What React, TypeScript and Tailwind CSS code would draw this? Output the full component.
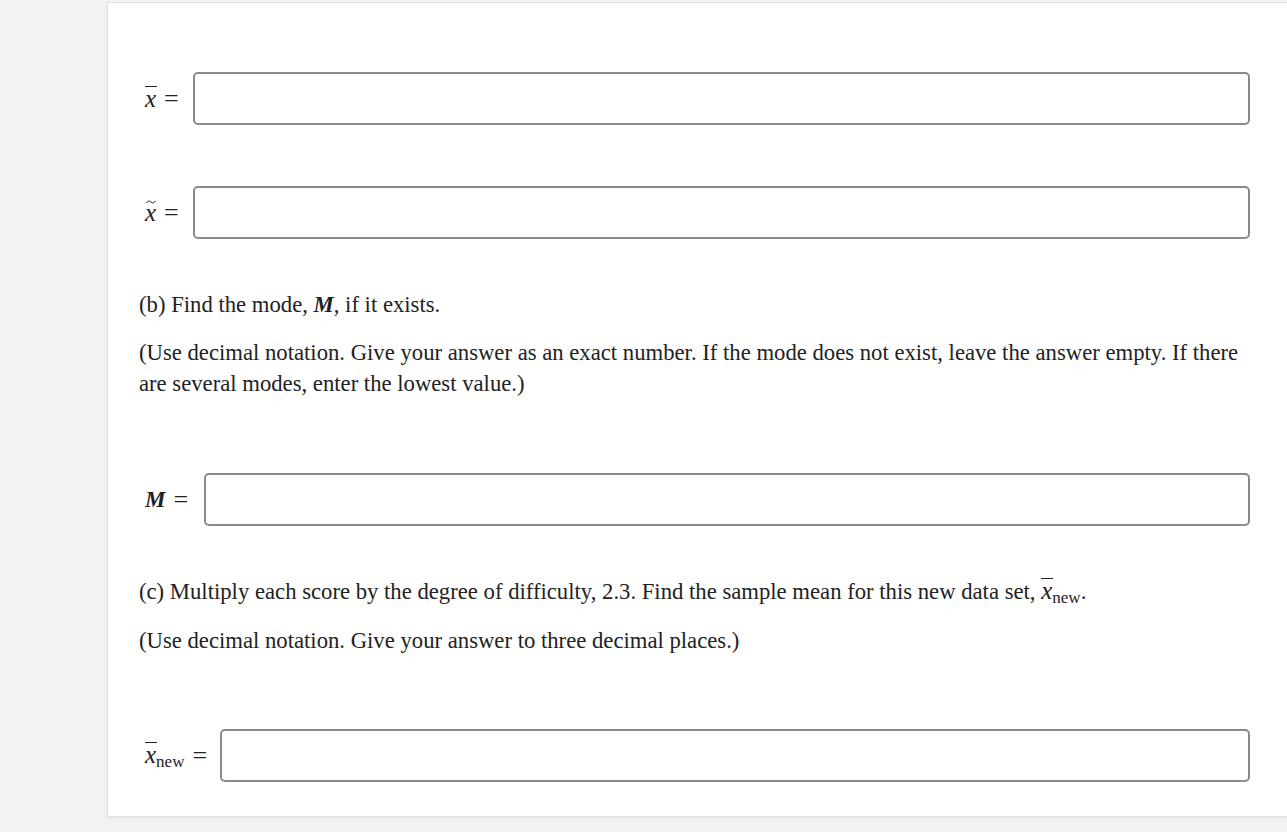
import React from "react";

const serif = { fontFamily: '"Liberation Serif", "Times New Roman", serif' };

function XBar() {
  return (
    <span className="relative inline-block text-[25px] italic">
      <span className="absolute left-0 right-[-1px] top-[3px] h-px bg-[#222]" />
      x
    </span>
  );
}

function XTilde() {
  return (
    <span className="relative inline-block text-[25px] italic">
      <svg className="absolute left-[1px] top-[3px]" width="10" height="4" viewBox="0 0 10 4">
        <path d="M0.5 3.2 C1.5 0.8 3.2 0.6 5 2 C6.8 3.4 8.3 3.2 9.5 0.8" fill="none" stroke="#222" strokeWidth="1" />
      </svg>
      x
    </span>
  );
}

function XNew() {
  return (
    <span className="inline-flex items-baseline">
      <XBar />
      <span className="relative top-[4px] text-[17px] not-italic">new</span>
    </span>
  );
}

function AnswerRow({ label, labelWidth }: { label: React.ReactNode; labelWidth: string }) {
  return (
    <div className="flex items-center">
      <div className={`flex shrink-0 items-center pl-[6px] text-[23px] text-[#222] ${labelWidth}`}>
        {label}
        <span className="ml-[8px] text-[26px] leading-none">=</span>
      </div>
      <input
        type="text"
        className="h-[53px] flex-1 rounded-[5px] border-2 border-[#8a8a8a] bg-white px-3 outline-none"
      />
    </div>
  );
}

export default function App() {
  return (
    <div className="min-h-screen bg-[#f2f2f2] pt-[2px] pl-[107px]" style={serif}>
      <div className="border border-r-0 border-[#e2e2e2] bg-white pt-[69px] pb-[34px] pl-[31px] pr-[37px] text-[22.7px] leading-[31px] text-[#222] shadow-[0_1px_2px_rgba(0,0,0,0.08)]">
        <AnswerRow label={<XBar />} labelWidth="w-[54px]" />
        <div className="mt-[61px]">
          <AnswerRow label={<XTilde />} labelWidth="w-[54px]" />
        </div>

        <p className="mt-[50px]">
          (b) Find the mode, <span className="font-bold italic">M</span>, if it exists.
        </p>
        <p className="mt-[17px]">
          (Use decimal notation. Give your answer as an exact number. If the mode does not exist, leave the answer
          empty. If there are several modes, enter the lowest value.)
        </p>

        <div className="mt-[74px]">
          <AnswerRow label={<span className="font-bold italic">M</span>} labelWidth="w-[65px]" />
        </div>

        <p className="mt-[49px]">
          (c) Multiply each score by the degree of difficulty, 2.3. Find the sample mean for this new data set,{" "}
          <XNew />.
        </p>
        <p className="mt-[16px]">(Use decimal notation. Give your answer to three decimal places.)</p>

        <div className="mt-[73px]">
          <AnswerRow label={<XNew />} labelWidth="w-[81px]" />
        </div>
      </div>
    </div>
  );
}
